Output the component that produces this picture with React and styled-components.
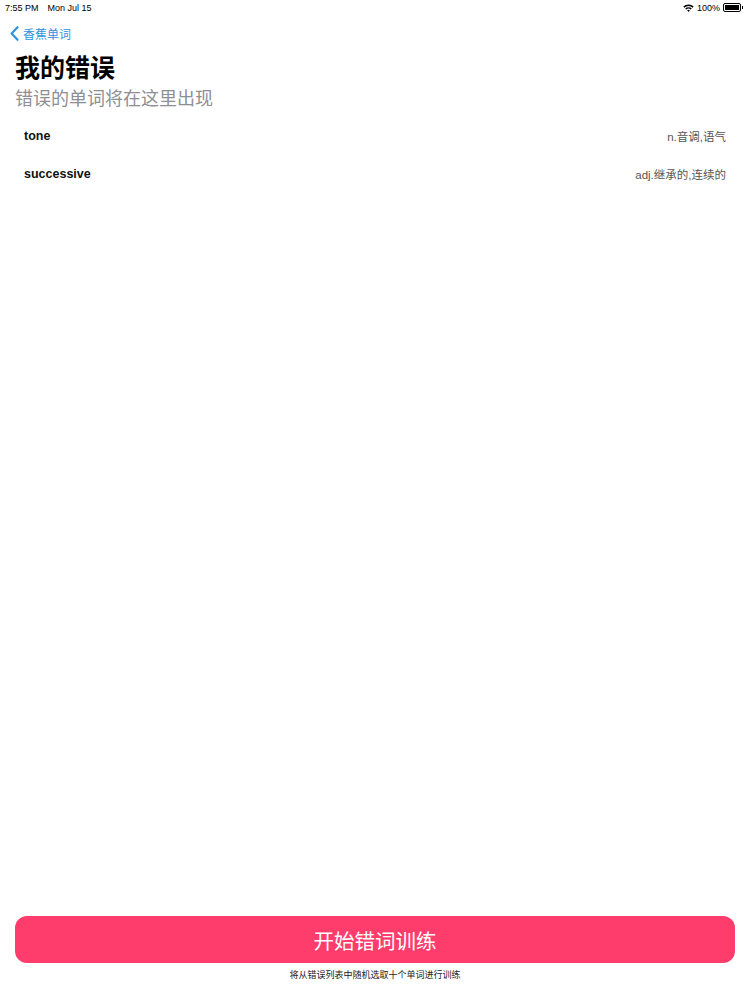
import styled, { createGlobalStyle } from 'styled-components';

const Global = createGlobalStyle`
  html, body { margin: 0; padding: 0; background: #fff; }
  body { font-family: "Liberation Sans", "Noto Sans CJK SC", sans-serif; }
`;

const words = [
  { word: 'tone', meaning: 'n.音调,语气' },
  { word: 'successive', meaning: 'adj.继承的,连续的' },
];

function App() {
  return (<Page>
    <Global />
    <StatusBar>
      <Clock>7:55 PM<span>Mon Jul 15</span></Clock>
      <Status>
        <svg width="11" height="8" viewBox="0 0 11 8">
          <path d="M0.3 2.6A7.4 7.4 0 0 1 10.7 2.6L9.6 3.7A5.8 5.8 0 0 0 1.4 3.7Z" fill="#000" />
          <path d="M2.2 4.5A4.7 4.7 0 0 1 8.8 4.5L7.7 5.6A3.1 3.1 0 0 0 3.3 5.6Z" fill="#000" />
          <path d="M4.2 6.5A1.8 1.8 0 0 1 6.8 6.5L5.5 7.9Z" fill="#000" />
        </svg>
        <span>100%</span>
        <Battery><BatteryFill /></Battery>
      </Status>
    </StatusBar>

    <Back>
      <svg width="9" height="15" viewBox="0 0 9 15">
        <path d="M7.5 1.2L1.6 7.5L7.5 13.8" fill="none" stroke="#2f93e0" strokeWidth="2.2" strokeLinecap="round" strokeLinejoin="round" />
      </svg>
      <BackLabel>香蕉单词</BackLabel>
    </Back>

    <Header>
      <Title>我的错误</Title>
      <Subtitle>错误的单词将在这里出现</Subtitle>
    </Header>

    <List>
      {words.map(w => (
        <Row key={w.word}>
          <Word>{w.word}</Word>
          <Meaning>{w.meaning}</Meaning>
        </Row>
      ))}
    </List>

    <Footer>
      <StartButton>开始错词训练</StartButton>
      <Note>将从错误列表中随机选取十个单词进行训练</Note>
    </Footer>
  </Page>);
}

export default App;

const Page = styled.div`
  width: 750px;
  height: 1000px;
  display: flex;
  flex-direction: column;
  overflow: hidden;
`;

const StatusBar = styled.div`
  height: 15px;
  padding: 0 9px 0 5px;
  display: flex;
  align-items: center;
  justify-content: space-between;
  font-size: 9px;
  color: #000;
`;

const Clock = styled.div`
  span { margin-left: 9px; }
`;

const Status = styled.div`
  display: flex;
  align-items: center;
  gap: 3px;
`;

const Battery = styled.div`
  width: 14px;
  height: 5px;
  border: 1px solid #000;
  border-radius: 2px;
  padding: 1px;
  position: relative;
  &::after {
    content: '';
    position: absolute;
    right: -3px;
    top: 2px;
    width: 1.5px;
    height: 3px;
    background: #000;
  }
`;

const BatteryFill = styled.div`
  width: 100%;
  height: 100%;
  background: #000;
`;

const Back = styled.div`
  display: flex;
  align-items: center;
  gap: 4px;
  padding: 11px 0 0 10px;
  height: 15px;
`;

const BackLabel = styled.span`
  font-size: 12px;
  color: #2f93e0;
`;

const Header = styled.div`
  padding: 12px 15px 0;
`;

const Title = styled.h1`
  margin: 0;
  font-size: 25px;
  line-height: 30px;
  font-weight: 700;
  color: #000;
`;

const Subtitle = styled.p`
  margin: 4px 0 0;
  font-size: 18px;
  line-height: 24px;
  color: #8e8e93;
`;

const List = styled.div`
  display: flex;
  flex-direction: column;
  padding: 6px 24px 0;
`;

const Row = styled.div`
  display: flex;
  justify-content: space-between;
  align-items: center;
  height: 38px;
`;

const Word = styled.span`
  font-size: 12.5px;
  font-weight: 700;
  color: #111;
`;

const Meaning = styled.span`
  font-size: 11.5px;
  color: #555;
`;

const Footer = styled.div`
  margin-top: auto;
  padding: 0 15px 19px;
  display: flex;
  flex-direction: column;
  align-items: center;
`;

const StartButton = styled.button`
  width: 100%;
  height: 47px;
  border: none;
  border-radius: 12px;
  background: #fe3d6c;
  color: #fff;
  font-family: "Liberation Sans", "Noto Sans CJK SC", sans-serif;
  font-size: 20.5px;
`;

const Note = styled.p`
  margin: 6px 0 0;
  font-size: 9px;
  line-height: 12px;
  color: #222;
`;
